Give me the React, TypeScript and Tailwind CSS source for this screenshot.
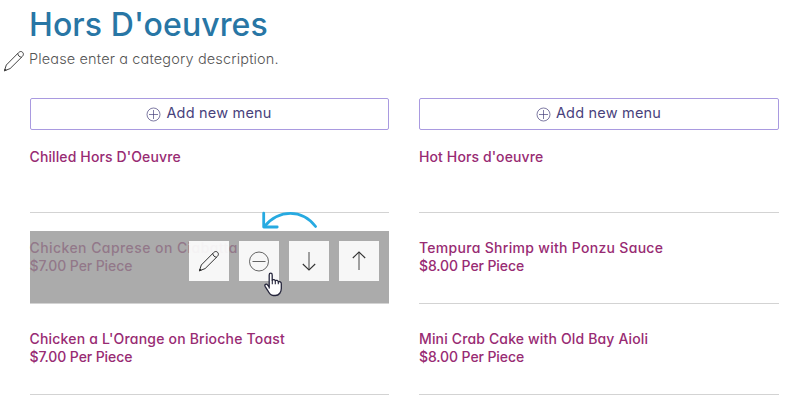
import type { ReactNode } from "react";
import { clsx } from "clsx";

interface MenuItem {
  name: string;
  nameClass?: string;
  price?: string;
  active?: boolean;
}

const columns: MenuItem[][] = [
  [
    { name: "Chilled Hors D'Oeuvre", nameClass: "tracking-[0.12px]" },
    { name: "Chicken Caprese on Ciabatta", nameClass: "tracking-[0.43px]", price: "$7.00 Per Piece", active: true },
    { name: "Chicken a L'Orange on Brioche Toast", nameClass: "tracking-[0.2px]", price: "$7.00 Per Piece" },
  ],
  [
    { name: "Hot Hors d'oeuvre", nameClass: "tracking-[0.12px]" },
    { name: "Tempura Shrimp with Ponzu Sauce", nameClass: "tracking-[0.3px]", price: "$8.00 Per Piece" },
    { name: "Mini Crab Cake with Old Bay Aioli", nameClass: "tracking-[0.15px]", price: "$8.00 Per Piece" },
  ],
];

function PencilIcon() {
  return (
    <svg width="22" height="22" viewBox="0 0 22 22" fill="none" stroke="currentColor" strokeLinejoin="round">
      <path d="M1.4 20.8 3.3 15 15.6 2.6C17 1.2 18.6 1.2 19.6 2.3 20.7 3.4 20.7 5 19.4 6.4L7.1 18.6Z" />
      <path d="M14.8 3.4C14.9 5.5 16.5 7.1 18.6 7.2" />
      <path d="M1.4 20.8 2 19 3.2 20.2Z" fill="currentColor" />
    </svg>
  );
}

function MinusIcon() {
  return (
    <svg width="22" height="22" viewBox="0 0 22 22" fill="none" stroke="currentColor" strokeWidth=".75">
      <circle cx="11" cy="11.5" r="9.5" />
      <path d="M4.5 11.5h13" />
    </svg>
  );
}

function ArrowIcon({ up }: { up?: boolean }) {
  return (
    <svg
      width="22"
      height="22"
      viewBox="0 0 22 22"
      fill="none"
      stroke="currentColor"
      className={clsx(up && "rotate-180")}
    >
      <path d="M11 2v18" strokeWidth=".9" />
      <path d="M4.8 14 11 20l6.2-6" strokeWidth="1.1" />
    </svg>
  );
}

function ActionButton({ children }: { children: ReactNode }) {
  return (
    <button className="flex h-10 w-10 items-center justify-center bg-white/90 text-[#333]">
      {children}
    </button>
  );
}

function ItemActions() {
  return (
    <div className="absolute inset-0 flex justify-end gap-2.5 bg-[#909090]/76 pt-2.5 pr-2.5">
      <ActionButton><PencilIcon /></ActionButton>
      <ActionButton><MinusIcon /></ActionButton>
      <ActionButton><ArrowIcon /></ActionButton>
      <ActionButton><ArrowIcon up /></ActionButton>
      {/* curved hint arrow */}
      <svg
        className="absolute -top-5 right-[70px]"
        width="58"
        height="20"
        viewBox="0 0 58 20"
        fill="none"
        stroke="#27aae1"
        strokeWidth="2.8"
        strokeLinecap="round"
        strokeLinejoin="round"
      >
        <path d="M3.4 15.5C18 -2 41 -2 54.6 15.5" />
        <path d="M2.7 2.2v13.8H16.2" />
      </svg>
      <svg className="absolute top-[41px] left-[234px]" width="19" height="25" viewBox="0 0 19 25">
        <path
          d="M5.2 16V3C5.2 .6 8.2 .6 8.2 3V8.2C9 7.2 11 7.4 11.3 8.8 12.3 8 14 8.4 14.3 9.8 15.6 9.2 17.3 9.9 17.3 11.8V16.5C17.3 19.8 15.3 23.5 11.3 23.5H9.3C6.7 23.5 4.7 20.5 3.6 18.3L1.1 14.3C.2 12.6 2.3 11.3 3.5 12.8L5.2 15Z"
          fill="#fff"
          stroke="#25253b"
          strokeWidth="1.3"
          strokeLinejoin="round"
        />
        <path d="M8.3 8v4.2M11.3 9v3.2M14.3 10v2.2" stroke="#25253b" strokeWidth="1.1" />
      </svg>
    </div>
  );
}

function AddMenuButton() {
  return (
    <button className="mb-2.5 flex h-8 w-full items-center justify-center gap-[5px] rounded-[2px] border border-[#a99ae0] pr-px pb-0.5 text-[14.5px] tracking-[0.2px] text-[#48427c]">
      <svg width="15" height="15" viewBox="0 0 15 15" fill="none" stroke="currentColor" strokeWidth=".7" className="mt-0.5">
        <circle cx="7.5" cy="7.5" r="6.5" />
        <path d="M7.5 3v9M3 7.5h9" />
      </svg>
      <span>Add new menu</span>
    </button>
  );
}

function MenuRow({ item }: { item: MenuItem }) {
  return (
    <div className="relative h-[73px] border-b border-[#d3d3d3] pt-2 text-sm leading-[18px] font-medium whitespace-nowrap text-[#982b73]">
      <p className={clsx("-ml-px pl-[0.5px]", item.nameClass)}>{item.name}</p>
      {item.price && <p className="-ml-px pl-[0.5px] tracking-[-0.1px]">{item.price}</p>}
      {item.active && <ItemActions />}
    </div>
  );
}

export default function App() {
  return (
    <main className="h-[403px] w-[794px] overflow-hidden bg-white font-['Inter',sans-serif] [font-feature-settings:'cv11']">
      <header className="h-[98px] pt-[5px]">
        <h1 className="pl-[29px] text-[32px] leading-10 font-medium tracking-[0.1px] whitespace-nowrap text-[#2876a5]">
          Hors D'oeuvres
        </h1>
        <div className="flex items-center pt-[3px] pl-[3px]">
          <span className="mt-0.5 mr-1 text-[#444]"><PencilIcon /></span>
          <p className="-mt-[3px] text-[14.5px] leading-5 font-light tracking-[0.14px] whitespace-nowrap text-[#555]">
            Please enter a category description.
          </p>
        </div>
      </header>
      <div className="grid grid-cols-[359px_360px] gap-[30px] pl-[30px]">
        {columns.map((items, i) => (
          <section key={i} className={clsx(i === 1 && "[&_p]:pl-px")}>
            <AddMenuButton />
            <div className="flex flex-col gap-[18px]">
              {items.map((item) => (
                <MenuRow key={item.name} item={item} />
              ))}
            </div>
          </section>
        ))}
      </div>
    </main>
  );
}
